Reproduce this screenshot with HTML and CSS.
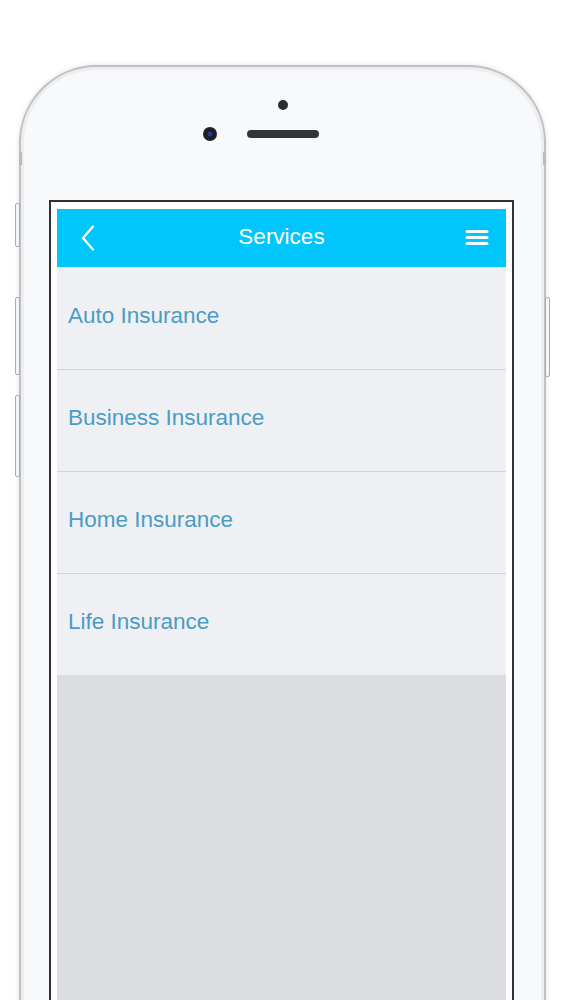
FILE: index.html
```html
<!DOCTYPE html>
<html>
<head>
<meta charset="utf-8">
<link rel="stylesheet" href="styles.css">
</head>
<body>
<div class="page">
  <div class="phone">
    <span class="btn btn-l1"></span>
    <span class="btn btn-l2"></span>
    <span class="btn btn-l3"></span>
    <span class="btn btn-r1"></span>
    <span class="band band-l"></span>
    <span class="band band-r"></span>
    <div class="bezel">
      <div class="sensor"></div>
      <div class="cam-row">
        <div class="camera"></div>
        <div class="speaker"></div>
        <div></div>
      </div>
    </div>
    <div class="frame">
      <div class="screen">
        <header class="bar">
          <svg class="back" width="14" height="26" viewBox="0 0 14 26"><path d="M12 1.5 L2 13 L12 24.5" fill="none" stroke="#fff" stroke-width="2.2" stroke-linecap="round" stroke-linejoin="round"/></svg>
          <h1 class="title">Services</h1>
          <svg class="menu" width="24" height="18" viewBox="0 0 24 18"><g stroke="#f2fbff" stroke-width="3" stroke-linecap="round"><line x1="2" y1="2.5" x2="22" y2="2.5"/><line x1="2" y1="8.5" x2="22" y2="8.5"/><line x1="2" y1="14.5" x2="22" y2="14.5"/></g></svg>
        </header>
        <ul class="list">
          <li class="item">Auto Insurance</li>
          <li class="item">Business Insurance</li>
          <li class="item">Home Insurance</li>
          <li class="item">Life Insurance</li>
        </ul>
        <div class="empty"></div>
      </div>
    </div>
  </div>
</div>
</body>
</html>
```
FILE: styles.css
```css
html, body {
  margin: 0;
  padding: 0;
  background: #ffffff;
}
body {
  height: 1000px;
  overflow: hidden;
  font-family: "Liberation Sans", Arial, sans-serif;
}
.page {
  padding-top: 65px;
  padding-left: 19px;
}
.phone {
  position: relative;
  box-sizing: border-box;
  width: 527px;
  height: 1100px;
  background: #f8f9fa;
  border: 2px solid #bfc1c4;
  border-radius: 78px 78px 0 0;
  box-shadow: 0 0 5px rgba(0,0,0,0.12), inset 0 0 0 3px #eceef0;
  padding: 0 0 0 28px;
}
.btn {
  position: absolute;
  width: 3px;
  background: #f4f5f6;
  border: 1px solid #a8aaad;
  border-radius: 2px;
}
.btn-l1 { left: -6px; top: 136px; height: 42px; }
.btn-l2 { left: -6px; top: 230px; height: 76px; }
.btn-l3 { left: -6px; top: 328px; height: 80px; }
.btn-r1 { right: -6px; top: 230px; height: 78px; }
.band {
  position: absolute;
  width: 3px;
  height: 13px;
  background: #b9bbbe;
  top: 85px;
}
.band-l { left: -2px; }
.band-r { right: -2px; }
.bezel {
  height: 133px;
  box-sizing: border-box;
  padding-top: 33px;
  margin-left: -28px;
}
.sensor {
  width: 10px;
  height: 10px;
  border-radius: 50%;
  background: #2b2c2e;
  margin: 0 auto;
}
.cam-row {
  margin-top: 17px;
  display: grid;
  grid-template-columns: 1fr auto 1fr;
  align-items: center;
}
.camera {
  justify-self: end;
  margin-right: 30px;
  width: 14px;
  height: 14px;
  border-radius: 50%;
  background: radial-gradient(circle at 50% 50%, #2a3a8a 0 2px, #1a1c28 3px, #222 7px);
}
.speaker {
  width: 72px;
  height: 8px;
  border-radius: 4px;
  background: #333436;
}
.frame {
  width: 465px;
  box-sizing: border-box;
  border: 2px solid #303133;
  border-bottom: none;
  padding: 7px 6px 0 6px;
  background: #ffffff;
  height: 900px;
}
.screen {
  background: #dcdde1;
  height: 100%;
}
.bar {
  height: 58px;
  background: #00c6fb;
  display: grid;
  grid-template-columns: 1fr auto 1fr;
  align-items: center;
}
.back {
  justify-self: start;
  margin-left: 24px;
  margin-bottom: 1px;
}
.title {
  margin: 0 0 2px 0;
  font-weight: normal;
  font-size: 22.5px;
  color: #ffffff;
  line-height: 1;
}
.menu {
  justify-self: end;
  margin-right: 17px;
}
.list {
  list-style: none;
  margin: 0;
  padding: 0;
  background: #eef0f4;
}
.item {
  height: 102px;
  box-sizing: border-box;
  border-bottom: 1px solid #d2d4d8;
  padding: 0 0 5px 11px;
  font-size: 22.5px;
  line-height: 28px;
  display: flex;
  align-items: center;
  color: #4a9cc5;
}
.item:first-child {
  height: 103px;
}
.item:last-child {
  border-bottom: none;
  height: 101px;
}
```
